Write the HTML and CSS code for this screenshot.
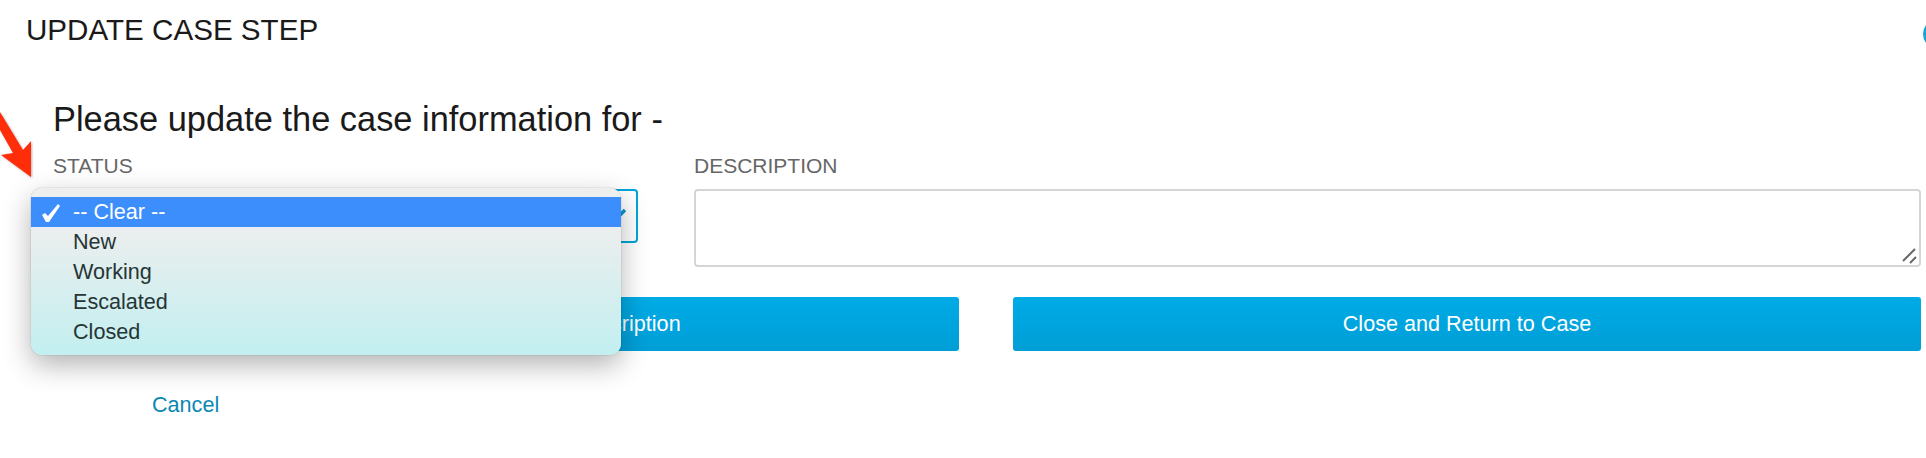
FILE: index.html
```html
<!DOCTYPE html>
<html lang="en">
<head>
    <meta charset="UTF-8">
    <title>Update Case Step</title>
    <link rel="stylesheet" href="styles.css">
</head>
<body>
    <header class="page-header">
        <h1>UPDATE CASE STEP</h1>
        <span class="help-icon"></span>
    </header>

    <svg class="arrow" width="36" height="74" viewBox="0 0 36 74">
        <polygon points="0,4 23,42 31,33 31,69 1,47 13,45 0,22" fill="#ff2d0a"></polygon>
    </svg>

    <form class="case-form">
        <h2>Please update the case information for -</h2>
        <div class="fields">
            <div class="form-group">
                <label>STATUS</label>
                <div class="select-wrap">
                    <div class="select-box">
                        <svg class="chevron" width="16" height="12" viewBox="0 0 16 12">
                            <polyline points="1,2 8,9 15,2" fill="none" stroke="#0b96c8" stroke-width="3.5"></polyline>
                        </svg>
                    </div>
                    <ul class="dropdown">
                        <li class="selected">
                            <svg class="check" width="20" height="20" viewBox="0 0 20 20">
                                <polygon points="1,12 4,10 7,13 17,1 19,3 8,19 5,19" fill="#fff"></polygon>
                            </svg>
                            -- Clear --
                        </li>
                        <li>New</li>
                        <li>Working</li>
                        <li>Escalated</li>
                        <li>Closed</li>
                    </ul>
                </div>
            </div>
            <div class="form-group">
                <label for="description">DESCRIPTION</label>
                <div class="textarea-wrap">
                    <textarea id="description"></textarea>
                    <svg class="grip" width="16" height="16" viewBox="0 0 16 16">
                        <line x1="1" y1="13" x2="13" y2="1" stroke="#666" stroke-width="2"></line>
                        <line x1="8" y1="15" x2="14" y2="9" stroke="#666" stroke-width="2"></line>
                    </svg>
                </div>
            </div>
        </div>
        <div class="actions">
            <button class="btn" type="button">Update Case Status and Description</button>
            <button class="btn" type="button">Close and Return to Case</button>
        </div>
        <a href="#" class="cancel-link">Cancel</a>
    </form>
</body>
</html>
```

FILE: styles.css
```css
* {
    margin: 0;
    padding: 0;
    box-sizing: border-box;
    font-family: "Liberation Sans", Arial, sans-serif;
}

body {
    position: relative;
    height: 458px;
    overflow: hidden;
    background-color: #fff;
    color: #1a1a1a;
}

.page-header {
    display: flex;
    align-items: center;
    justify-content: space-between;
    height: 60px;
    padding-left: 26px;
}

h1 {
    font-size: 29.6px;
    font-weight: normal;
    line-height: 32px;
}

.help-icon {
    flex: none;
    width: 30px;
    height: 30px;
    margin: 8px -27px 0 0;
    border: 3px solid #14a5dc;
    border-radius: 50%;
}

.arrow {
    position: absolute;
    left: 0;
    top: 108px;
    filter: drop-shadow(1px 1px 1px rgba(0, 0, 0, 0.3));
}

.case-form {
    padding: 0 5px 0 53px;
}

h2 {
    margin-top: 43px;
    font-size: 34.4px;
    font-weight: normal;
    line-height: 32px;
}

.fields {
    display: grid;
    grid-template-columns: 585px 1fr;
    gap: 56px;
}

label {
    display: block;
    margin: 21px 0 13px;
    font-size: 21px;
    line-height: 20px;
    color: #666;
}

.select-wrap {
    position: relative;
}

.select-box {
    height: 54px;
    border: 2px solid #00a5dc;
    border-radius: 4px;
    background-color: #fff;
}

.chevron {
    position: absolute;
    top: 19px;
    right: 12px;
}

.dropdown {
    position: absolute;
    top: -1px;
    left: -22px;
    width: 590px;
    height: 167px;
    padding: 9px 0 8px;
    list-style: none;
    border-radius: 11px;
    background: linear-gradient(to bottom, #eeeeee, #e9eeee 30%, #c2eff0);
    box-shadow: 0 0 1px rgba(0, 0, 0, 0.5), 0 10px 28px rgba(0, 0, 0, 0.3);
}

.dropdown li {
    position: relative;
    height: 30px;
    padding-left: 42px;
    font-size: 21.6px;
    line-height: 30px;
    color: #263535;
}

.dropdown .selected {
    background-color: #3b8efc;
    color: #fff;
}

.check {
    position: absolute;
    left: 10px;
    top: 6px;
}

.textarea-wrap {
    position: relative;
}

textarea {
    display: block;
    width: 100%;
    height: 78px;
    border: 2px solid #d5d5d5;
    border-radius: 4px;
    resize: none;
}

.grip {
    position: absolute;
    right: 3px;
    bottom: 3px;
}

.actions {
    display: grid;
    grid-template-columns: 906px 1fr;
    gap: 54px;
    margin-top: 30px;
}

.btn {
    height: 54px;
    background: linear-gradient(to bottom, #00abe6, #009ed6);
    border: none;
    border-radius: 3px;
    color: #fff;
    font-size: 21.6px;
}

.cancel-link {
    display: block;
    width: max-content;
    margin: 40px 0 0 99px;
    font-size: 21.6px;
    line-height: 28px;
    color: #0a87b4;
    text-decoration: none;
}
```
